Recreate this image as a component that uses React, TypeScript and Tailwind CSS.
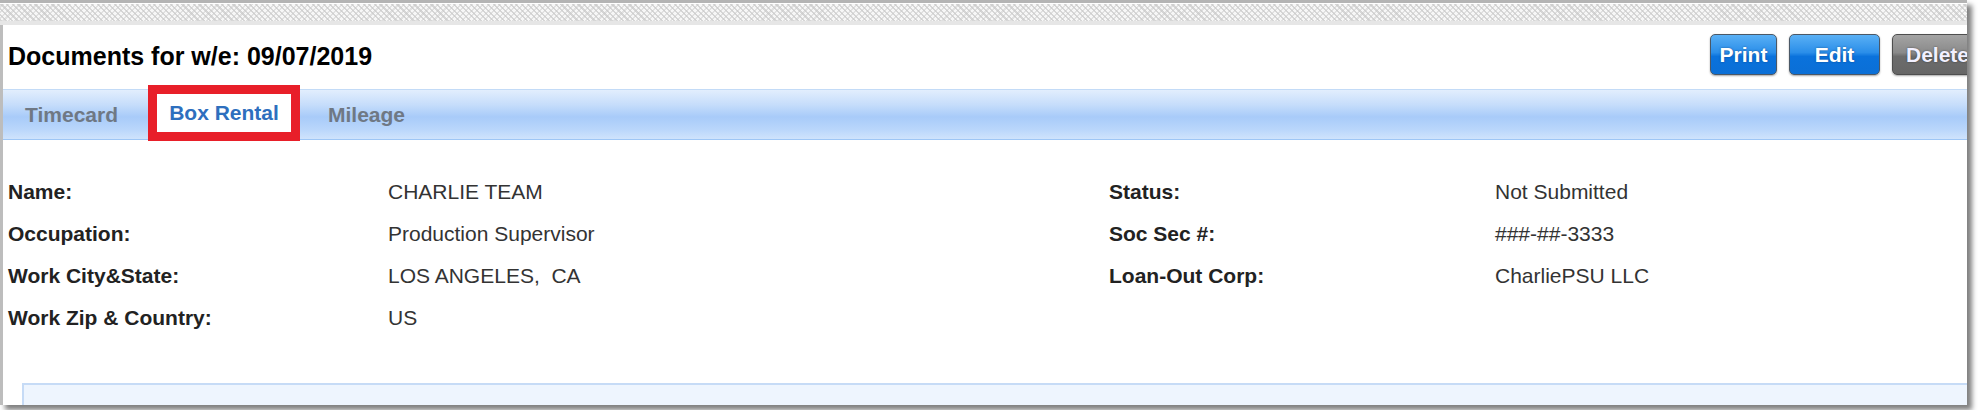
import React from "react"

type Field = { label: string; value: string }

const leftFields: Field[] = [
  { label: "Name:", value: "CHARLIE TEAM" },
  { label: "Occupation:", value: "Production Supervisor" },
  { label: "Work City&State:", value: "LOS ANGELES,  CA" },
  { label: "Work Zip & Country:", value: "US" },
]

const rightFields: (Field | null)[] = [
  { label: "Status:", value: "Not Submitted" },
  { label: "Soc Sec #:", value: "###-##-3333" },
  { label: "Loan-Out Corp:", value: "CharliePSU LLC" },
  null,
]

const blueBtn =
  "h-[41px] rounded-[5px] border border-[#4b5866] bg-[linear-gradient(to_bottom,#5ab0f5_0%,#2a8ee9_45%,#0a72dc_55%,#0b6fd6_100%)] text-white text-[21px] font-bold shadow-[0_1px_2px_rgba(0,0,0,0.35)] [text-shadow:0_0_2px_rgba(0,40,90,0.6)]"

const App = () => {
  return (
    <div className="w-[1978px] h-[410px] bg-white font-['Liberation_Sans',Arial,sans-serif]">
      <div className="w-[1967px] h-[405px] bg-white overflow-hidden flex flex-col shadow-[5px_5px_5px_rgba(0,0,0,0.5)]">
        {/* window top strip */}
        <div className="h-[3px] bg-[#b4b4b4]" />
        <div className="h-[1px] bg-white" />
        <div className="h-[17px] bg-[#f7f7f7] bg-[repeating-linear-gradient(45deg,rgba(200,200,200,0.7)_0px,rgba(200,200,200,0.7)_1.5px,transparent_1.5px,transparent_4px),repeating-linear-gradient(-45deg,rgba(210,210,210,0.6)_0px,rgba(210,210,210,0.6)_1.5px,transparent_1.5px,transparent_4px)]" />
        <div className="h-[4px] bg-[#e6e6e6]" />

        <div className="flex-1 flex flex-col border-l-[3px] border-[#bdbdbd]">
          <div className="h-[64px] shrink-0 flex justify-between items-start pl-[5px] pt-[9px]">
            <h1 className="mt-[7px] text-[25px] leading-[30px] font-bold text-black">Documents for w/e: 09/07/2019</h1>
            <div className="flex gap-[12px] shrink-0 -mr-[16px]">
              <button className={`${blueBtn} w-[67px]`}>Print</button>
              <button className={`${blueBtn} w-[91px]`}>Edit</button>
              <button className="h-[41px] w-[91px] rounded-[5px] border border-[#4e4e4e] bg-[linear-gradient(to_bottom,#a4a4a4_0%,#8a8a8a_45%,#6c6c6c_55%,#666_100%)] text-[#f2f0ff] text-[21px] font-bold shadow-[0_1px_2px_rgba(0,0,0,0.35)] [text-shadow:0_0_2px_rgba(0,0,0,0.5)]">
                Delete
              </button>
            </div>
          </div>

          <div className="h-[51px] shrink-0 flex items-center border-t border-b border-t-[#c3dbf7] border-b-[#9ec6f5] bg-[linear-gradient(to_bottom,#e2eefd_0%,#c6ddfb_30%,#a8cbf9_55%,#b9d6fb_80%,#cfe3fc_100%)] text-[21px] font-bold">
            <span className="w-[145px] pl-[22px] text-[#6f7884]">Timecard</span>
            <div className="self-start -mt-[5px] h-[56px] w-[152px] border-[9px] border-[#e81f29] bg-white flex items-center justify-center text-[#2e6fbe]">
              Box Rental
            </div>
            <span className="pl-[28px] text-[#6f7884]">Mileage</span>
          </div>

          <div className="pt-[31px] pl-[5px] grid grid-cols-[380px_721px_386px_1fr] text-[21px] leading-[42px]">
            {leftFields.map((f, i) => {
              const r = rightFields[i]
              return (
                <React.Fragment key={f.label}>
                  <div className="font-bold text-[#222]">{f.label}</div>
                  <div className="text-[#333] whitespace-pre">{f.value}</div>
                  <div className="font-bold text-[#222]">{r ? r.label : ""}</div>
                  <div className="text-[#333]">{r ? r.value : ""}</div>
                </React.Fragment>
              )
            })}
          </div>

          <div className="mt-[44px] ml-[19px] flex-1 border-t-2 border-l-2 border-[#c6dbf6] bg-[#eef5fe]" />
        </div>
      </div>
    </div>
  )
}

export default App
